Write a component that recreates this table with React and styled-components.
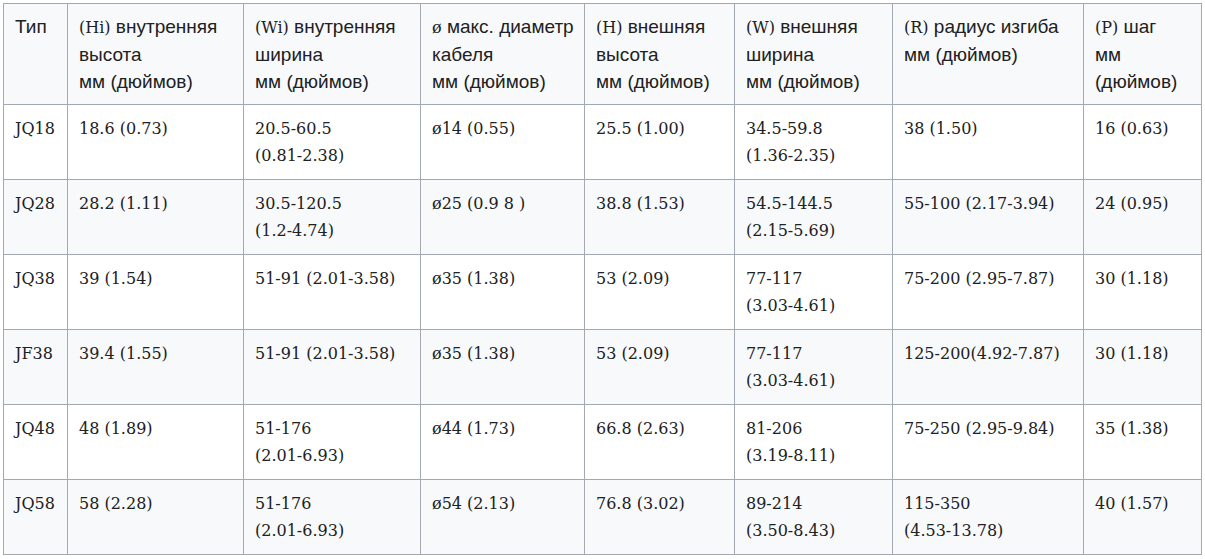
import React from "react";
import styled, { createGlobalStyle } from "styled-components";

const Global = createGlobalStyle`
  html, body { margin: 0; padding: 0; background: #ffffff; }
  body { padding: 3px; color: #202122; }
`;

const Table = styled.table`
  border-collapse: collapse;
  table-layout: fixed;
  width: 1199px;
  border: 1px solid #a2a9b1;
  font-family: "DejaVu Serif", "Liberation Serif", serif;
  font-size: 16px;
  line-height: 27px;
  color: #202122;
`;

const Col = styled.col`
  width: ${(p) => p.$w}px;
`;

const HeadRow = styled.tr`
  background: #f8f9fa;
`;

const Row = styled.tr`
  background: ${(p) => (p.$alt ? "#f8f9fa" : "#ffffff")};
`;

const HeadCell = styled.th`
  border: 1px solid #a2a9b1;
  padding: 9px 10px 9px 11px;
  text-align: left;
  vertical-align: top;
  font-weight: normal;
  font-size: 19px;
  font-family: "Liberation Sans", Arial, sans-serif;
`;

const Letter = styled.span`
  font-family: "DejaVu Serif", "Liberation Serif", serif;
  font-size: 16px;
`;

const Cell = styled.td`
  border: 1px solid #a2a9b1;
  padding: 10px 10px 10px 11px;
  vertical-align: top;
  text-align: left;
`;

const Line = styled.div`
  white-space: nowrap;
`;

const widths = [64, 176, 177, 164, 150, 158, 191, 118];

const headers = [
  [["Тип"]],
  [[<Letter key="l">(Hi)</Letter>, " внутренняя"], ["высота"], ["мм (дюймов)"]],
  [[<Letter key="l">(Wi)</Letter>, " внутренняя"], ["ширина"], ["мм (дюймов)"]],
  [[<Letter key="l">ø</Letter>, " макс. диаметр"], ["кабеля"], ["мм (дюймов)"]],
  [[<Letter key="l">(H)</Letter>, " внешняя"], ["высота"], ["мм (дюймов)"]],
  [[<Letter key="l">(W)</Letter>, " внешняя"], ["ширина"], ["мм (дюймов)"]],
  [[<Letter key="l">(R)</Letter>, " радиус изгиба"], ["мм (дюймов)"]],
  [[<Letter key="l">(P)</Letter>, " шаг"], ["мм"], ["(дюймов)"]],
];

const rows = [
  [["JQ18"], ["18.6 (0.73)"], ["20.5-60.5", "(0.81-2.38)"], ["ø14 (0.55)"], ["25.5 (1.00)"], ["34.5-59.8", "(1.36-2.35)"], ["38 (1.50)"], ["16 (0.63)"]],
  [["JQ28"], ["28.2 (1.11)"], ["30.5-120.5", "(1.2-4.74)"], ["ø25 (0.9 8 )"], ["38.8 (1.53)"], ["54.5-144.5", "(2.15-5.69)"], ["55-100 (2.17-3.94)"], ["24 (0.95)"]],
  [["JQ38"], ["39 (1.54)"], ["51-91 (2.01-3.58)"], ["ø35 (1.38)"], ["53 (2.09)"], ["77-117", "(3.03-4.61)"], ["75-200 (2.95-7.87)"], ["30 (1.18)"]],
  [["JF38"], ["39.4 (1.55)"], ["51-91 (2.01-3.58)"], ["ø35 (1.38)"], ["53 (2.09)"], ["77-117", "(3.03-4.61)"], ["125-200(4.92-7.87)"], ["30 (1.18)"]],
  [["JQ48"], ["48 (1.89)"], ["51-176", "(2.01-6.93)"], ["ø44 (1.73)"], ["66.8 (2.63)"], ["81-206", "(3.19-8.11)"], ["75-250 (2.95-9.84)"], ["35 (1.38)"]],
  [["JQ58"], ["58 (2.28)"], ["51-176", "(2.01-6.93)"], ["ø54 (2.13)"], ["76.8 (3.02)"], ["89-214", "(3.50-8.43)"], ["115-350", "(4.53-13.78)"], ["40 (1.57)"]],
];

export default function App() {
  return (
    <>
      <Global />
      <Table>
        <colgroup>
          {widths.map((w, i) => (
            <Col key={i} $w={w} />
          ))}
        </colgroup>
        <thead>
          <HeadRow>
            {headers.map((lines, i) => (
              <HeadCell key={i}>
                {lines.map((parts, j) => (
                  <Line key={j}>{parts}</Line>
                ))}
              </HeadCell>
            ))}
          </HeadRow>
        </thead>
        <tbody>
          {rows.map((cells, r) => (
            <Row key={r} $alt={r % 2 === 1}>
              {cells.map((lines, c) => (
                <Cell key={c}>
                  {lines.map((t, j) => (
                    <Line key={j}>{t}</Line>
                  ))}
                </Cell>
              ))}
            </Row>
          ))}
        </tbody>
      </Table>
    </>
  );
}
